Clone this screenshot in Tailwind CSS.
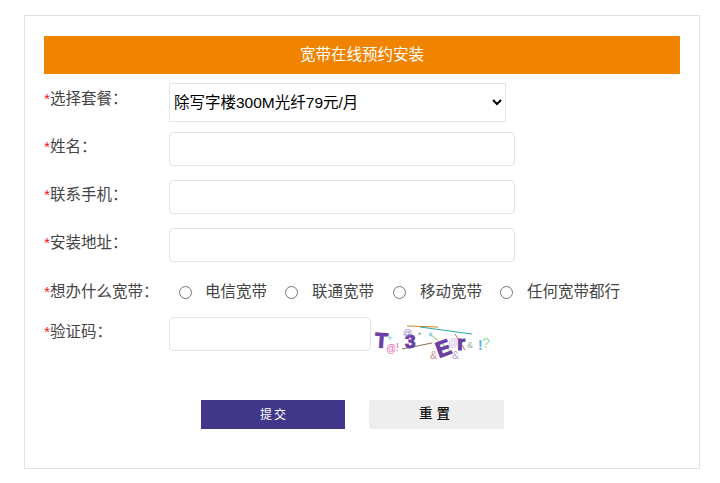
<!DOCTYPE html>
<html lang="zh-CN">
<head>
    <meta charset="UTF-8">
    <title>宽带在线预约安装</title>
    <script src="https://cdn.jsdelivr.net/npm/@tailwindcss/browser@4"></script>
</head>
<body class="bg-white font-['Liberation_Sans','Noto_Sans_CJK_SC',sans-serif] text-[15.5px] text-[#444]">
    <div class="ml-[24px] mt-[15px] w-[676px] h-[454px] border border-[#e2e2e2] px-[19px] pt-[20px]">
        <div class="h-[38px] bg-[#f08300] text-white flex items-center justify-center">宽带在线预约安装</div>

        <form>
            <!-- 套餐 -->
            <div class="flex mt-[9px]">
                <label class="w-[125px] pt-[6px] leading-[20px]"><span class="text-[#f02020]">*</span>选择套餐：</label>
                <select class="w-[337px] h-[39px] border border-[#e4e4e4] bg-white text-[15.5px] text-black appearance-auto">
                    <option>除写字楼300M光纤79元/月</option>
                </select>
            </div>

            <div class="flex mt-[10px]">
                <label class="w-[125px] pt-[5px] leading-[20px]"><span class="text-[#f02020]">*</span>姓名：</label>
                <input type="text" class="w-[346px] h-[34px] border border-[#e4e4e4] rounded-[4px] bg-white">
            </div>

            <div class="flex mt-[14px]">
                <label class="w-[125px] pt-[5px] leading-[20px]"><span class="text-[#f02020]">*</span>联系手机：</label>
                <input type="text" class="w-[346px] h-[34px] border border-[#e4e4e4] rounded-[4px] bg-white">
            </div>

            <div class="flex mt-[14px]">
                <label class="w-[125px] pt-[5px] leading-[20px]"><span class="text-[#f02020]">*</span>安装地址：</label>
                <input type="text" class="w-[346px] h-[34px] border border-[#e4e4e4] rounded-[4px] bg-white">
            </div>

            <!-- 宽带类型 -->
            <div class="flex items-center mt-[20px] h-[20px]">
                <label class="w-[135px] leading-[20px]"><span class="text-[#f02020]">*</span>想办什么宽带：</label>
                <div class="flex items-center">
                    <input type="radio" name="kd" class="w-[13px] h-[13px] m-0">
                    <span class="ml-[13px] w-[80px]">电信宽带</span>
                    <input type="radio" name="kd" class="w-[13px] h-[13px] m-0">
                    <span class="ml-[14px] w-[81px]">联通宽带</span>
                    <input type="radio" name="kd" class="w-[13px] h-[13px] m-0">
                    <span class="ml-[14px] w-[80px]">移动宽带</span>
                    <input type="radio" name="kd" class="w-[13px] h-[13px] m-0">
                    <span class="ml-[14px]">任何宽带都行</span>
                </div>
            </div>

            <!-- 验证码 -->
            <div class="flex mt-[15px]">
                <label class="w-[125px] pt-[5px] leading-[20px]"><span class="text-[#f02020]">*</span>验证码：</label>
                <input type="text" class="w-[202px] h-[34px] border border-[#e4e4e4] rounded-[4px] bg-white">
                <svg width="120" height="46" viewBox="0 0 120 46" class="ml-[1px] mt-[-1px]">
                    <line x1="35" y1="10" x2="66" y2="11" stroke="#c8862a" stroke-width="1"/>
                    <line x1="48" y1="11" x2="100" y2="18" stroke="#2aa5a8" stroke-width="1"/>
                    <line x1="30" y1="33" x2="60" y2="27" stroke="#8a7050" stroke-width="1"/>
                    <line x1="58" y1="18" x2="81" y2="37" stroke="#8dbb5a" stroke-width="1"/>
                    <line x1="83" y1="18" x2="93" y2="34" stroke="#c86a4a" stroke-width="1"/>
                    <text x="3" y="32" font-family="Liberation Sans" font-weight="700" font-size="21" fill="#6a3fa5" stroke="#6a3fa5" stroke-width="1" transform="rotate(4 12 26)">T</text>
                    <text x="33" y="32" font-family="Liberation Sans" font-weight="700" font-size="19" fill="#6a3fa5" stroke="#6a3fa5" stroke-width="1">3</text>
                    <text x="64" y="39" font-family="Liberation Sans" font-weight="700" font-size="22" fill="#6a3fa5" stroke="#6a3fa5" stroke-width="1" transform="rotate(-20 74 32)">E</text>
                    <text x="85" y="34" font-family="Liberation Sans" font-weight="700" font-size="21" fill="#6a3fa5" stroke="#6a3fa5" stroke-width="1">r</text>
                    <text x="14" y="36" font-family="Liberation Sans" font-size="10" fill="#e86ab0">@</text>
                    <text x="16" y="28" font-family="Liberation Sans" font-size="10" fill="#7fd8c4">*</text>
                    <text x="24" y="35" font-family="Liberation Sans" font-size="11" fill="#e86ab0">!</text>
                    <text x="31" y="20" font-family="Liberation Sans" font-size="9" fill="#8a78c0">@</text>
                    <text x="46" y="22" font-family="Liberation Sans" font-size="9" fill="#8a9a70">*</text>
                    <text x="56" y="25" font-family="Liberation Sans" font-size="12" fill="#70c8f0">*</text>
                    <text x="58" y="43" font-family="Liberation Sans" font-size="11" fill="#c89090">&amp;</text>
                    <text x="76" y="30" font-family="Liberation Sans" font-size="10" fill="#d8b8e8">@</text>
                    <text x="80" y="43" font-family="Liberation Sans" font-size="11" fill="#c0a8e0">&amp;</text>
                    <text x="95" y="32" font-family="Liberation Sans" font-size="9" fill="#90b8a0">&amp;</text>
                    <text x="106" y="34" font-family="Liberation Sans" font-size="14" font-weight="700" fill="#60b0f0">!</text>
                    <text x="110" y="32" font-family="Liberation Sans" font-size="14" fill="#90e8a8">?</text>
                </svg>
            </div>

            <!-- 按钮 -->
            <div class="flex mt-[38px] pl-[157px]">
                <button type="button" class="w-[144px] h-[29px] bg-[#40368a] text-white text-[12px] tracking-[2px] pl-[2px]">提交</button>
                <button type="reset" class="ml-[24px] w-[135px] h-[29px] bg-[#eee] rounded-[2px] text-[#111] text-[13.5px] tracking-[4px] font-medium">重置</button>
            </div>
        </form>
    </div>
</body>
</html>
